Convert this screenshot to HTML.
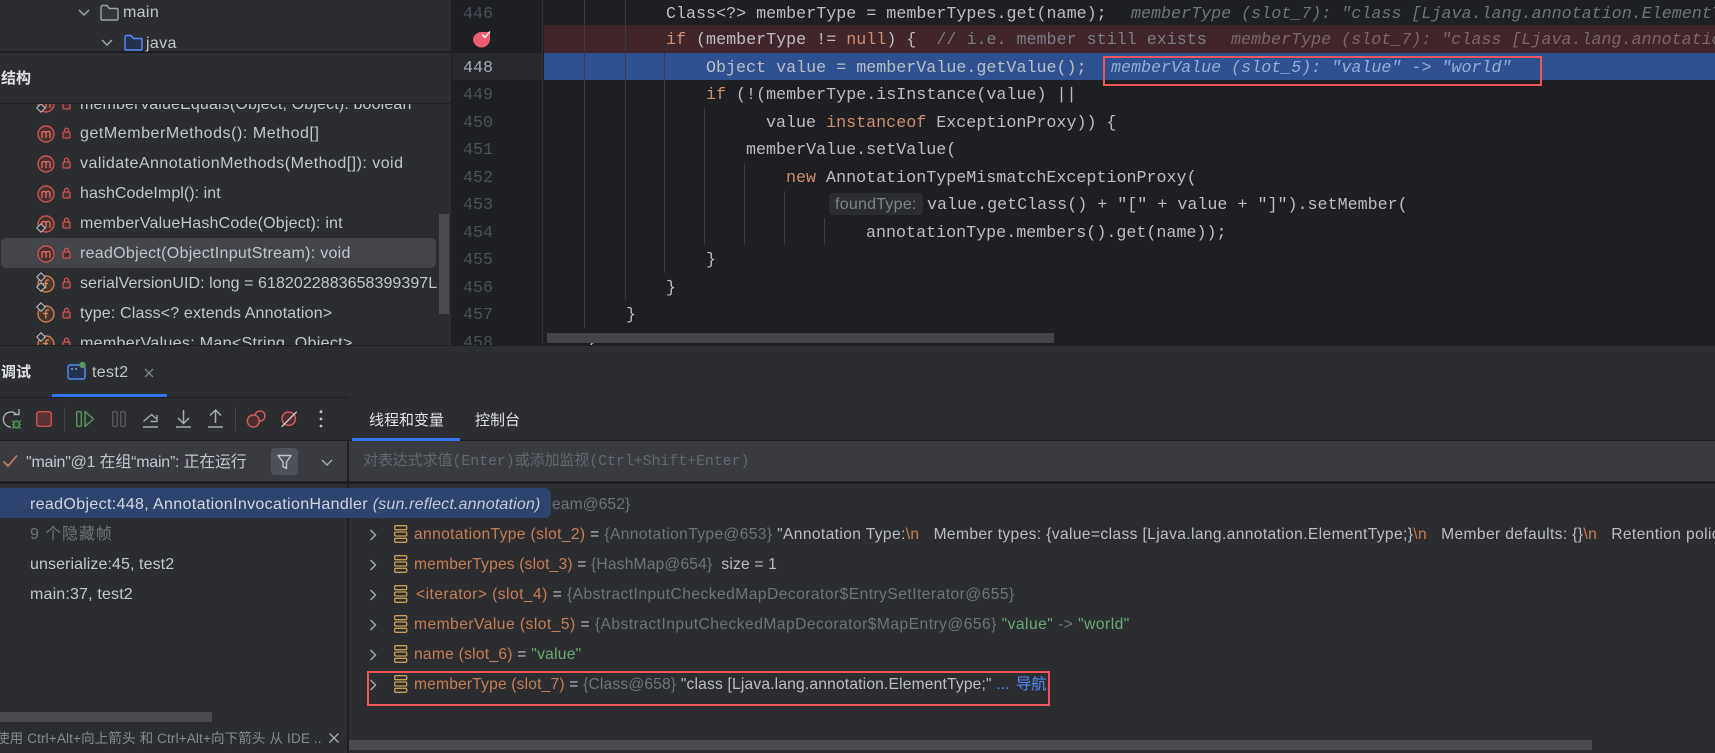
<!DOCTYPE html>
<html><head><meta charset="utf-8">
<style>
html,body{margin:0;padding:0;background:#2b2d30;}
body{width:1715px;height:753px;position:relative;overflow:hidden;font-family:"Liberation Sans","Noto Sans CJK SC",sans-serif;color:#bcbec4;}
.a{position:absolute;}
.t{position:absolute;white-space:pre;line-height:20px;height:20px;}
.u{font-size:16px;letter-spacing:.35px;color:#c3c6cc;}
.c{font-family:"Liberation Mono","Noto Sans CJK SC",monospace;font-size:16.7px;color:#bcbec4;line-height:20px;}
.n{font-family:"Liberation Mono",monospace;font-size:16.7px;color:#4b5059;left:463px;}
.k{color:#cf8e6d;}
.cm{color:#7a7e85;}
.h{font-style:italic;color:#6f737a;overflow:hidden;}
.v{font-size:15.6px;color:#bcbec4;left:414px;letter-spacing:.12px;}
.o{color:#c77d55;}
.g{color:#6f737a;}
.s{color:#6aab73;}
.l{background:#393b40;width:1px;position:absolute;}
svg{position:absolute;overflow:visible;}
</style></head><body>
<svg width="0" height="0" style="position:absolute">
<defs>
<symbol id="m" viewBox="0 0 18 18" overflow="visible"><circle cx="9" cy="9" r="8" fill="#4a2f30" stroke="#c75450" stroke-width="1.4"/><path d="M5 13V6.5M5 8c0-1.5 3.5-2.5 4 0v5M9 8c0-1.5 4-2.5 4 0v5" fill="none" stroke="#e0706c" stroke-width="1.3"/></symbol>
<symbol id="f" viewBox="0 0 18 18" overflow="visible"><circle cx="9" cy="9" r="8" fill="#47352a" stroke="#c77d55" stroke-width="1.4"/><path d="M12 5.2c-1.800-.8-3.200 0-3.200 1.800V13.500M6 8.500h5" fill="none" stroke="#d68a60" stroke-width="1.3"/></symbol>
<symbol id="lk" viewBox="0 0 10 12" overflow="visible"><rect x="1" y="5" width="7" height="6" rx="1" fill="#4a2f30" stroke="#c75450" stroke-width="1.3"/><path d="M2.500 5V3.200a2 2 0 0 1 4 0V5" fill="none" stroke="#c75450" stroke-width="1.300"/></symbol>
<symbol id="d" viewBox="0 0 10 10" overflow="visible"><path d="M5 .8L9.200 5 5 9.200 .8 5z" fill="#2b2d30" stroke="#b0b3b8" stroke-width="1.200"/></symbol>
<symbol id="st" viewBox="0 0 14 18" overflow="visible"><g fill="none" stroke="#c9a24d" stroke-width="1.300"><rect x=".7" y=".7" width="12" height="4" rx="1"/><rect x=".7" y="7" width="12" height="4" rx="1"/><rect x=".7" y="13.300" width="12" height="4" rx="1"/></g></symbol>
<symbol id="ch" viewBox="0 0 8 12" overflow="visible"><path d="M1.500 1L6.500 6l-5 5" fill="none" stroke="#a8abb0" stroke-width="1.400"/></symbol>
</defs></svg>

<!-- editor -->
<div class="a" style="left:451px;top:0;width:1264px;height:345px;background:#1e1f22"></div>
<div class="a" style="left:452px;top:53px;width:91px;height:27px;background:#26282e"></div>
<div class="a" style="left:542px;top:0;width:1px;height:345px;background:#2f3136"></div>
<div class="a" style="left:544px;top:25px;width:1171px;height:28px;background:#40252b"></div>
<div class="a" style="left:544px;top:53px;width:1171px;height:27px;background:#2d5191"></div>
<div class="l" style="left:584px;top:0;height:328px"></div>
<div class="l" style="left:625px;top:0;height:300px"></div>
<div class="l" style="left:664px;top:53px;height:220px"></div>
<div class="l" style="left:704px;top:108px;height:137px"></div>
<div class="l" style="left:744px;top:163px;height:82px"></div>
<div class="l" style="left:784px;top:191px;height:54px"></div>
<div class="l" style="left:824px;top:218px;height:27px"></div>

<div class="t n" style="top:5px">446</div>
<div class="t n" style="top:59px;color:#a9acb2">448</div>
<div class="t n" style="top:86px">449</div>
<div class="t n" style="top:114px">450</div>
<div class="t n" style="top:141px">451</div>
<div class="t n" style="top:169px">452</div>
<div class="t n" style="top:196px">453</div>
<div class="t n" style="top:224px">454</div>
<div class="t n" style="top:251px">455</div>
<div class="t n" style="top:279px">456</div>
<div class="t n" style="top:306px">457</div>
<div class="t n" style="top:334px">458</div>
<svg style="left:470px;top:28px" width="22" height="22" viewBox="0 0 22 22"><path d="M3 11a8.500 8.500 0 1 0 17 0V4H11.500A8.500 8.500 0 0 0 3 11z" fill="#ed5d6f"/><path d="M12 6.500l3 3 5-6" fill="none" stroke="#e8e8e8" stroke-width="1.600"/></svg>

<div class="t c" style="left:666px;top:5px">Class&lt;?&gt; memberType = memberTypes.get(name);</div>
<div class="t c h" style="left:1131px;top:5px;width:584px">memberType (slot_7): "class [Ljava.lang.annotation.ElementType;"</div>
<div class="t c" style="left:666px;top:31px"><span class="k">if</span> (memberType != <span class="k">null</span>) {  <span class="cm">// i.e. member still exists</span></div>
<div class="t c h" style="left:1231px;top:31px;width:484px;color:#77686c">memberType (slot_7): "class [Ljava.lang.annotation.ElementType;"</div>
<div class="t c" style="left:706px;top:59px">Object value = memberValue.getValue();</div>
<div class="t c h" style="left:1111px;top:59px;color:#93aed6">memberValue (slot_5): "value" -&gt; "world"</div>
<div class="t c" style="left:706px;top:86px"><span class="k">if</span> (!(memberType.isInstance(value) ||</div>
<div class="t c" style="left:766px;top:114px">value <span class="k">instanceof</span> ExceptionProxy)) {</div>
<div class="t c" style="left:746px;top:141px">memberValue.setValue(</div>
<div class="t c" style="left:786px;top:169px"><span class="k">new</span> AnnotationTypeMismatchExceptionProxy(</div>
<div class="a" style="left:829px;top:193px;width:94px;height:22px;background:#2b2d30;border-radius:4px"></div>
<div class="t" style="left:835px;top:195px;font-size:16px;letter-spacing:.25px;color:#7f8288">foundType:</div>
<div class="t c" style="left:927px;top:196px">value.getClass() + "[" + value + "]").setMember(</div>
<div class="t c" style="left:866px;top:224px">annotationType.members().get(name));</div>
<div class="t c" style="left:706px;top:251px">}</div>
<div class="t c" style="left:666px;top:279px">}</div>
<div class="t c" style="left:626px;top:306px">}</div>
<div class="t c" style="left:586px;top:334px">}</div>
<div class="a" style="left:547px;top:333px;width:507px;height:10px;background:#444547"></div>
<div class="a" style="left:1103px;top:56px;width:435px;height:26px;border:2px solid #f0575b"></div>

<!-- left top -->
<div class="a" style="left:0;top:0;width:451px;height:345px;background:#2b2d30"></div>
<div class="a" style="left:0;top:51px;width:451px;height:2px;background:#1e1f22"></div>
<div class="a" style="left:0;top:103px;width:451px;height:1px;background:#1e1f22"></div>
<svg style="left:78px;top:9px" width="12" height="8"><path d="M1 1l5 5 5-5" fill="none" stroke="#a8abb0" stroke-width="1.400"/></svg>
<svg style="left:100px;top:4px" width="19" height="17"><path d="M1 15V3a1.500 1.500 0 0 1 1.500-1.500h4.500L9.500 4.500h7.500a1 1 0 0 1 1 1V15a1 1 0 0 1-1 1H2a1 1 0 0 1-1-1z" fill="#34363a" stroke="#9da0a8" stroke-width="1.400"/></svg>
<div class="t u" style="left:123px;top:3px">main</div>
<svg style="left:101px;top:39px" width="12" height="8"><path d="M1 1l5 5 5-5" fill="none" stroke="#a8abb0" stroke-width="1.400"/></svg>
<svg style="left:124px;top:34px" width="19" height="17"><path d="M1 15V3a1.500 1.500 0 0 1 1.500-1.500h4.500L9.500 4.500h7.500a1 1 0 0 1 1 1V15a1 1 0 0 1-1 1H2a1 1 0 0 1-1-1z" fill="#25324d" stroke="#548af7" stroke-width="1.400"/></svg>
<div class="t u" style="left:146px;top:34px">java</div>
<div class="t" style="left:1px;top:68px;font-size:15px;font-weight:700;color:#dfe1e5;line-height:22px;height:22px">结构</div>

<div class="a" style="left:0;top:104px;width:451px;height:241px;overflow:hidden">
<div class="a" style="left:1px;top:134px;width:435px;height:30px;background:#43454a;border-radius:5px"></div>
<div class="a" style="left:439px;top:110px;width:10px;height:100px;background:#4a4b4e"></div>
<svg style="left:37px;top:-9px" width="18" height="18"><use href="#m"/></svg>
<svg style="left:37px;top:21px" width="18" height="18"><use href="#m"/></svg>
<svg style="left:37px;top:51px" width="18" height="18"><use href="#m"/></svg>
<svg style="left:37px;top:81px" width="18" height="18"><use href="#m"/></svg>
<svg style="left:37px;top:111px" width="18" height="18"><use href="#m"/></svg>
<svg style="left:37px;top:141px" width="18" height="18"><use href="#m"/></svg>
<svg style="left:37px;top:171px" width="18" height="18"><use href="#f"/></svg>
<svg style="left:37px;top:201px" width="18" height="18"><use href="#f"/></svg>
<svg style="left:37px;top:231px" width="18" height="18"><use href="#f"/></svg>
<svg style="left:36px;top:-1px" width="10" height="10"><use href="#d"/></svg>
<svg style="left:36px;top:119px" width="10" height="10"><use href="#d"/></svg>
<svg style="left:36px;top:168px" width="10" height="10"><use href="#d"/></svg>
<svg style="left:36px;top:178px" width="10" height="10"><use href="#d"/></svg>
<svg style="left:36px;top:198px" width="10" height="10"><use href="#d"/></svg>
<svg style="left:36px;top:228px" width="10" height="10"><use href="#d"/></svg>
<svg style="left:62px;top:-6px" width="10" height="12"><use href="#lk"/></svg>
<svg style="left:62px;top:23px" width="10" height="12"><use href="#lk"/></svg>
<svg style="left:62px;top:53px" width="10" height="12"><use href="#lk"/></svg>
<svg style="left:62px;top:83px" width="10" height="12"><use href="#lk"/></svg>
<svg style="left:62px;top:113px" width="10" height="12"><use href="#lk"/></svg>
<svg style="left:62px;top:143px" width="10" height="12"><use href="#lk"/></svg>
<svg style="left:62px;top:173px" width="10" height="12"><use href="#lk"/></svg>
<svg style="left:62px;top:203px" width="10" height="12"><use href="#lk"/></svg>
<svg style="left:62px;top:233px" width="10" height="12"><use href="#lk"/></svg>
<div class="t u" style="left:80px;top:-9px;letter-spacing:.15px">memberValueEquals(Object, Object): boolean</div>
<div class="t u" style="left:80px;top:20px;letter-spacing:.55px">getMemberMethods(): Method[]</div>
<div class="t u" style="left:80px;top:50px;letter-spacing:.47px">validateAnnotationMethods(Method[]): void</div>
<div class="t u" style="left:80px;top:80px;letter-spacing:.06px">hashCodeImpl(): int</div>
<div class="t u" style="left:80px;top:110px;letter-spacing:.19px">memberValueHashCode(Object): int</div>
<div class="t u" style="left:80px;top:140px;letter-spacing:.29px">readObject(ObjectInputStream): void</div>
<div class="t u" style="left:80px;top:170px;letter-spacing:.06px">serialVersionUID: long = 6182022883658399397L</div>
<div class="t u" style="left:80px;top:200px;letter-spacing:.15px">type: Class&lt;? extends Annotation&gt;</div>
<div class="t u" style="left:80px;top:230px;letter-spacing:.32px">memberValues: Map&lt;String, Object&gt;</div>
</div>

<!-- debug header -->
<div class="a" style="left:0;top:345px;width:1715px;height:408px;background:#2b2d30"></div>
<div class="a" style="left:0;top:345px;width:1715px;height:1px;background:#1e1f22"></div>
<div class="t" style="left:1px;top:362px;font-size:15px;font-weight:700;color:#dfe1e5;line-height:22px;height:22px">调试</div>
<svg style="left:67px;top:361px" width="20" height="20"><rect x="1" y="4" width="17" height="14" rx="2" fill="#25324d" stroke="#548af7" stroke-width="1.400"/><path d="M4 8h2M8 8h2" stroke="#9db8ee" stroke-width="1.200"/><circle cx="15.500" cy="4" r="3.200" fill="#57965c"/></svg>
<div class="t u" style="left:92px;top:363px">test2</div>
<svg style="left:144px;top:368px" width="10" height="10"><path d="M1 1l8 8M9 1l-8 8" stroke="#7f8288" stroke-width="1.300"/></svg>
<div class="a" style="left:52px;top:394px;width:115px;height:4px;background:#3574f0"></div>
<div class="a" style="left:0;top:397px;width:349px;height:1px;background:#1e1f22"></div>
<div class="a" style="left:0;top:440px;width:1715px;height:1px;background:#1e1f22"></div>

<!-- toolbar -->
<svg style="left:0;top:397px" width="345" height="44" fill="none">
<path d="M16 17A7.500 7.500 0 1 0 11 30" stroke="#a8abb0" stroke-width="1.400"/>
<path d="M13.500 17.500h5.500V12" stroke="#a8abb0" stroke-width="1.400"/>
<ellipse cx="16.500" cy="27.500" rx="3" ry="3.500" fill="#2f4a33" stroke="#57965c" stroke-width="1.400"/>
<path d="M12 23.500l2 2M21 23.500l-2 2M12 27.500h1.500M21 27.500h-1.500M12 31.500l2-1.500M21 31.500l-2-1.500" stroke="#57965c" stroke-width="1.200"/>
<rect x="36.700" y="14.700" width="14.600" height="14.600" rx="2.500" fill="#5a3235" stroke="#c75450" stroke-width="1.400"/>
<path d="M64.500 10v24" stroke="#43454a" stroke-width="1"/>
<rect x="76.700" y="14.700" width="4.600" height="14.600" rx="1" stroke="#57965c" stroke-width="1.400"/>
<path d="M85 14.500L93.500 22 85 29.500z" stroke="#57965c" stroke-width="1.400" stroke-linejoin="round"/>
<rect x="112.700" y="14.700" width="4.600" height="14.600" rx="1" stroke="#55575b" stroke-width="1.400"/>
<rect x="120.700" y="14.700" width="4.600" height="14.600" rx="1" stroke="#55575b" stroke-width="1.400"/>
<path d="M143 30h15" stroke="#a8abb0" stroke-width="1.500"/>
<path d="M143.500 24.500L151.500 17.500 156 21.500M157 18v6.500h-6.500" stroke="#a8abb0" stroke-width="1.400"/>
<path d="M176 30h15M183.500 13v13M178 21l5.500 5.500 5.500-5.500" stroke="#a8abb0" stroke-width="1.500"/>
<path d="M208 30h15M215.500 26V13M210 18.500l5.500-5.500 5.500 5.500" stroke="#a8abb0" stroke-width="1.500"/>
<path d="M235.500 10v24" stroke="#43454a" stroke-width="1"/>
<circle cx="260" cy="19" r="5" stroke="#d05a58" stroke-width="1.500"/>
<circle cx="253.300" cy="24" r="6" fill="#4e2d2e" stroke="#d05a58" stroke-width="1.500"/>
<circle cx="288.700" cy="21.700" r="6.700" fill="#4e2d2e" stroke="#d05a58" stroke-width="1.500"/>
<path d="M281.700 29.700L296.700 14.700" stroke="#c9cbd0" stroke-width="1.400"/>
<circle cx="321" cy="14.700" r="1.400" fill="#c3c6cc"/><circle cx="321" cy="22" r="1.400" fill="#c3c6cc"/><circle cx="321" cy="29" r="1.400" fill="#c3c6cc"/>
</svg>

<div class="t" style="left:369px;top:409px;font-size:15px;color:#dfe1e5;line-height:24px;height:24px">线程和变量</div>
<div class="t" style="left:475px;top:409px;font-size:15px;color:#dfe1e5;line-height:24px;height:24px">控制台</div>
<div class="a" style="left:352px;top:438px;width:108px;height:3px;background:#3574f0"></div>

<!-- thread row / input -->
<div class="a" style="left:0;top:441px;width:347px;height:40px;background:#393b40"></div>
<div class="a" style="left:349px;top:441px;width:1366px;height:40px;background:#393b40"></div>
<div class="a" style="left:0;top:481px;width:1715px;height:3px;background:#1e1f22"></div>
<div class="a" style="left:347px;top:441px;width:2px;height:312px;background:#1e1f22"></div>
<svg style="left:2px;top:454px" width="17" height="14"><path d="M1.500 7.500l4.500 4.500 9-10.500" fill="none" stroke="#c77d55" stroke-width="1.700"/></svg>
<div class="t u" style="left:26px;top:453px;letter-spacing:-.23px">"main"@1 在组“main”: 正在运行</div>
<div class="a" style="left:271px;top:448px;width:27px;height:27px;background:#4e5157;border-radius:4px"></div>
<svg style="left:277px;top:454px" width="16" height="16"><path d="M1 1.500h13L9.500 8v6.500L6 12.500V8z" fill="none" stroke="#c3c6cc" stroke-width="1.400" stroke-linejoin="round"/></svg>
<svg style="left:321px;top:459px" width="12" height="8"><path d="M1 1l5 5 5-5" fill="none" stroke="#a8abb0" stroke-width="1.400"/></svg>
<div class="t" style="left:363px;top:452px;font-family:'Liberation Mono','Noto Sans CJK SC',monospace;font-size:15px;color:#63666c;letter-spacing:-.1px">对表达式求值(Enter)或添加监视(Ctrl+Shift+Enter)</div>

<!-- variables -->
<div class="t v g" style="left:552px;top:495px">eam@652}</div>
<div class="a" style="left:0;top:488px;width:551px;height:30px;background:#2e436e;border-radius:0 6px 6px 0"></div>
<div class="t u" style="left:30px;top:495px;color:#d3d6dc">readObject:448, AnnotationInvocationHandler <i style="color:#c3c9d6;letter-spacing:.17px">(sun.reflect.annotation)</i></div>
<div class="t u" style="left:30px;top:525px;color:#6f737a;letter-spacing:.9px">9 个隐藏帧</div>
<div class="t u" style="left:30px;top:555px;letter-spacing:.09px">unserialize:45, test2</div>
<div class="t u" style="left:30px;top:585px;letter-spacing:.17px">main:37, test2</div>
<div class="a" style="left:0;top:712px;width:212px;height:10px;background:#4a4b4e"></div>
<div class="a" style="left:0;top:729px;width:325px;height:20px;overflow:hidden"><div class="t" style="left:-4px;top:0;font-size:13.5px;color:#868a91;letter-spacing:.15px">使用 Ctrl+Alt+向上箭头 和 Ctrl+Alt+向下箭头 从 IDE ..</div></div>
<svg style="left:329px;top:733px" width="10" height="10"><path d="M.5.500l9 9M9.500.500l-9 9" stroke="#a8abb0" stroke-width="1.300"/></svg>

<svg style="left:369px;top:529px" width="8" height="12"><use href="#ch"/></svg>
<svg style="left:369px;top:559px" width="8" height="12"><use href="#ch"/></svg>
<svg style="left:369px;top:589px" width="8" height="12"><use href="#ch"/></svg>
<svg style="left:369px;top:619px" width="8" height="12"><use href="#ch"/></svg>
<svg style="left:369px;top:649px" width="8" height="12"><use href="#ch"/></svg>
<svg style="left:369px;top:679px" width="8" height="12"><use href="#ch"/></svg>
<svg style="left:394px;top:525px" width="14" height="18"><use href="#st"/></svg>
<svg style="left:394px;top:555px" width="14" height="18"><use href="#st"/></svg>
<svg style="left:394px;top:585px" width="14" height="18"><use href="#st"/></svg>
<svg style="left:394px;top:615px" width="14" height="18"><use href="#st"/></svg>
<svg style="left:394px;top:645px" width="14" height="18"><use href="#st"/></svg>
<svg style="left:394px;top:675px" width="14" height="18"><use href="#st"/></svg>

<div class="a" style="left:349px;top:520px;width:1366px;height:200px;overflow:hidden">
<div class="t v" style="left:65px;top:5px;letter-spacing:.37px"><span class="o">annotationType (slot_2)</span> = <span class="g">{AnnotationType@653}</span> "Annotation Type:<span class="o">\n</span>   Member types: {value=class [Ljava.lang.annotation.ElementType;}<span class="o">\n</span>   Member defaults: {}<span class="o">\n</span>   Retention policy: RUNTIME</div>
<div class="t v" style="left:65px;top:35px;letter-spacing:.18px"><span class="o">memberTypes (slot_3)</span> = <span class="g">{HashMap@654}</span>  size = 1</div>
<div class="t v" style="left:67px;top:65px;letter-spacing:.46px"><span class="o">&lt;iterator&gt; (slot_4)</span> = <span class="g">{AbstractInputCheckedMapDecorator$EntrySetIterator@655}</span></div>
<div class="t v" style="left:65px;top:95px;letter-spacing:.47px"><span class="o">memberValue (slot_5)</span> = <span class="g">{AbstractInputCheckedMapDecorator$MapEntry@656}</span> <span class="s">"value"</span> <span class="g">-&gt;</span> <span class="s">"world"</span></div>
<div class="t v" style="left:65px;top:125px;letter-spacing:.26px"><span class="o">name (slot_6)</span> = <span class="s">"value"</span></div>
<div class="t v" style="left:65px;top:155px;letter-spacing:.18px"><span class="o">memberType (slot_7)</span> = <span class="g">{Class@658}</span> "class [Ljava.lang.annotation.ElementType;" <span style="color:#548af7">...<span style="margin-left:2px;letter-spacing:-.3px"> 导航</span></span></div>
</div>
<div class="a" style="left:367px;top:671px;width:679px;height:31px;border:2px solid #f0575b"></div>
<div class="a" style="left:349px;top:740px;width:1243px;height:10px;background:#4a4b4e"></div>
</body></html>
